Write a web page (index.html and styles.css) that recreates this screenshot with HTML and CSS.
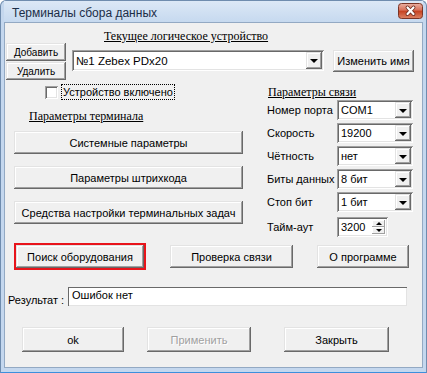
FILE: index.html
```html
<!DOCTYPE html>
<html lang="ru">
<head>
  <meta charset="UTF-8">
  <title>Терминалы сбора данных</title>
  <link rel="stylesheet" href="styles.css">
</head>
<body>

  <div class="window">
    <div class="titlebar">
      <span class="title">Терминалы сбора данных</span>
      <svg class="close" width="25" height="16" viewBox="0 0 25 16">
        <defs>
          <linearGradient id="closeGrad" x1="0" y1="0" x2="0" y2="1">
            <stop offset="0" stop-color="#eab1a3"/>
            <stop offset="0.45" stop-color="#d76f58"/>
            <stop offset="0.5" stop-color="#c5401f"/>
            <stop offset="1" stop-color="#dc8466"/>
          </linearGradient>
        </defs>
        <rect x="0.5" y="0.5" width="24" height="15" rx="3" fill="url(#closeGrad)" stroke="#7a3426"/>
        <path d="M9.5 4.5 L15.5 11 M15.5 4.5 L9.5 11" stroke="#6b2c20" stroke-width="3.8" stroke-linecap="round"/>
        <path d="M9.5 4.5 L15.5 11 M15.5 4.5 L9.5 11" stroke="#fff" stroke-width="2.2" stroke-linecap="round"/>
      </svg>
    </div>

    <div class="client">
      <div class="device-head"><span class="caption">Текущее логическое устройство</span></div>

      <div class="device-row">
        <div class="device-buttons">
          <button class="btn small">Добавить</button>
          <button class="btn small">Удалить</button>
        </div>
        <div class="combo device-combo">
          <span class="combo-text">№1 Zebex PDx20</span>
          <span class="drop"></span>
        </div>
        <button class="btn rename">Изменить имя</button>
      </div>

      <div class="params">
        <div class="col-left">
          <div class="check">
            <span class="check-box"></span>
            <span class="check-label">Устройство включено</span>
          </div>
          <div class="caption group-left">Параметры терминала</div>
          <div class="term-buttons">
            <button class="btn term">Системные параметры</button>
            <button class="btn term">Параметры штрихкода</button>
            <button class="btn term">Средства настройки терминальных задач</button>
          </div>
        </div>

        <div class="col-right">
          <div class="caption group-right">Параметры связи</div>
          <div class="fields">
            <div class="field">
              <span class="field-label">Номер порта</span>
              <div class="combo small-combo"><span class="combo-text">COM1</span><span class="drop"></span></div>
            </div>
            <div class="field">
              <span class="field-label">Скорость</span>
              <div class="combo small-combo"><span class="combo-text">19200</span><span class="drop"></span></div>
            </div>
            <div class="field">
              <span class="field-label">Чётность</span>
              <div class="combo small-combo"><span class="combo-text">нет</span><span class="drop"></span></div>
            </div>
            <div class="field">
              <span class="field-label">Биты данных</span>
              <div class="combo small-combo"><span class="combo-text">8 бит</span><span class="drop"></span></div>
            </div>
            <div class="field">
              <span class="field-label">Стоп бит</span>
              <div class="combo small-combo"><span class="combo-text">1 бит</span><span class="drop"></span></div>
            </div>
            <div class="field spin-field">
              <span class="field-label">Тайм-аут</span>
              <div class="combo spin">
                <span class="combo-text">3200</span>
                <span class="spin-btns"><span class="spin-up"></span><span class="spin-down"></span></span>
              </div>
            </div>
          </div>
        </div>
      </div>

      <div class="actions">
        <div class="highlight"><button class="btn search">Поиск оборудования</button></div>
        <button class="btn check-link">Проверка связи</button>
        <button class="btn about">О программе</button>
      </div>

      <div class="result">
        <span class="result-label">Результат :</span>
        <div class="result-box">Ошибок нет</div>
      </div>

      <div class="footer">
        <button class="btn ok">ok</button>
        <button class="btn apply" disabled>Применить</button>
        <button class="btn close-btn">Закрыть</button>
      </div>
    </div>
  </div>

</body>
</html>
```

FILE: styles.css
```css
* {
  box-sizing: border-box;
}

body {
  margin: 0;
  background: #fff;
  font-family: "Liberation Sans", Arial, sans-serif;
  font-size: 11px;
  color: #000;
  white-space: nowrap;
}

.window {
  width: 427px;
  height: 373px;
  display: flex;
  flex-direction: column;
  border: 1px solid #6f8cae;
  border-bottom-color: #3d8fdc;
  border-radius: 6px 6px 0 0;
  background: #c4d7ee;
  padding: 0 3px 4px;
}

.titlebar {
  height: 21px;
  display: flex;
  justify-content: space-between;
  align-items: center;
  padding: 0 0 0 8px;
  background: linear-gradient(#dce8f6, #c6d9ef);
}

.title {
  padding-top: 3px;
  font-size: 12px;
  color: #1b2d47;
}

.close {
  align-self: flex-start;
  margin-top: 2px;
}

.client {
  flex: 1;
  border: 1px solid #93a9c3;
  background: #f0f0f0;
}

.caption {
  font-family: "Liberation Serif", "Times New Roman", serif;
  font-size: 12px;
  line-height: 14px;
  text-decoration: underline;
}

.device-head {
  height: 20px;
  padding: 6px 0 0 99px;
}

.device-row {
  display: flex;
  align-items: flex-start;
  height: 37px;
}

.device-buttons {
  display: flex;
  flex-direction: column;
  gap: 1px;
  margin-left: 1px;
}

/* classic 3d button */
.btn {
  font: inherit;
  color: #000;
  background: #f0f0f0;
  border: 0;
  padding: 0;
  white-space: nowrap;
  box-shadow: inset -1px -1px #696969, inset 1px 1px #e3e3e3,
    inset -2px -2px #a0a0a0, inset 2px 2px #fff;
}

.btn:disabled {
  color: #a0a0a0;
  text-shadow: 1px 1px #fff;
}

.small {
  width: 60px;
  height: 18px;
  font-size: 10px;
}

.combo {
  display: flex;
  align-items: stretch;
  background: #fff;
  padding: 2px;
  box-shadow: inset 1px 1px #a0a0a0, inset -1px -1px #fff,
    inset 2px 2px #696969, inset -2px -2px #e3e3e3;
}

.combo-text {
  flex: 1;
  display: flex;
  align-items: center;
  padding-left: 2px;
}

.drop {
  width: 16px;
  background: #f0f0f0;
  box-shadow: inset -1px -1px #696969, inset 1px 1px #e3e3e3,
    inset -2px -2px #a0a0a0, inset 2px 2px #fff;
  display: flex;
  align-items: center;
  justify-content: center;
}

.drop::after {
  content: "";
  border-left: 4px solid transparent;
  border-right: 4px solid transparent;
  border-top: 4px solid #000;
  margin-top: 1px;
}

.device-combo {
  width: 252px;
  height: 21px;
  margin: 7px 0 0 6px;
  font-size: 11.5px;
}

.rename {
  width: 81px;
  height: 22px;
  margin: 7px 0 0 9px;
  font-size: 11px;
}

.params {
  display: flex;
}

.col-left {
  width: 262px;
  padding-top: 4px;
}

.check {
  display: flex;
  align-items: center;
  height: 16px;
  padding-left: 40px;
  gap: 3px;
}

.check-box {
  width: 13px;
  height: 13px;
  background: #fff;
  box-shadow: inset 1px 1px #a0a0a0, inset -1px -1px #fff,
    inset 2px 2px #696969, inset -2px -2px #e3e3e3;
}

.check-label {
  border: 1px dotted #000;
  padding: 0 1px;
  line-height: 14px;
  font-size: 11px;
}

.group-left {
  margin-top: 9px;
  padding-left: 24px;
}

.term-buttons {
  display: flex;
  flex-direction: column;
  gap: 12px;
  margin-top: 8px;
  padding-left: 9px;
}

.term {
  width: 229px;
  height: 23px;
  font-size: 11px;
}

.col-right {
  padding-top: 5px;
}

.group-right {
  padding-left: 1px;
}

.fields {
  display: flex;
  flex-direction: column;
  gap: 3px;
  margin-top: 1px;
}

.field {
  display: flex;
  align-items: center;
  height: 20px;
}

.field-label {
  width: 70px;
}

.small-combo {
  width: 76px;
  height: 20px;
}

.spin-field {
  margin-top: 2px;
}

.spin {
  width: 51px;
  height: 20px;
}

.spin-btns {
  width: 13px;
  display: flex;
  flex-direction: column;
  margin: 1px 1px 1px 0;
}

.spin-up,
.spin-down {
  flex: 1;
  display: flex;
  align-items: center;
  justify-content: center;
  background: #f0f0f0;
  box-shadow: inset -1px -1px #a0a0a0, inset 1px 1px #fff;
}

.spin-up::after {
  content: "";
  border-left: 3px solid transparent;
  border-right: 3px solid transparent;
  border-bottom: 3px solid #000;
}

.spin-down::after {
  content: "";
  border-left: 3px solid transparent;
  border-right: 3px solid transparent;
  border-top: 3px solid #000;
}

.actions {
  display: flex;
  align-items: center;
  gap: 24px;
  margin-top: 6px;
  padding-left: 9px;
  height: 27px;
}

.highlight {
  border: 2px solid #e8141b;
  display: flex;
}

.search {
  width: 128px;
  height: 23px;
}

.check-link {
  width: 123px;
  height: 23px;
}

.about {
  width: 92px;
  height: 23px;
}

.result {
  display: flex;
  align-items: flex-start;
  margin-top: 17px;
  padding-left: 3px;
}

.result-label {
  width: 60px;
  padding-top: 6px;
  line-height: 14px;
}

.result-box {
  width: 339px;
  height: 19px;
  background: #fff;
  padding: 1px 0 0 4px;
  line-height: 15px;
  box-shadow: inset 1px 1px #696969, inset -1px -1px #e3e3e3;
}

.footer {
  display: flex;
  margin-top: 20px;
}

.ok {
  width: 102px;
  height: 25px;
  margin-left: 17px;
}

.apply {
  width: 104px;
  height: 25px;
  margin-left: 23px;
}

.close-btn {
  width: 105px;
  height: 25px;
  margin-left: 33px;
}
```
